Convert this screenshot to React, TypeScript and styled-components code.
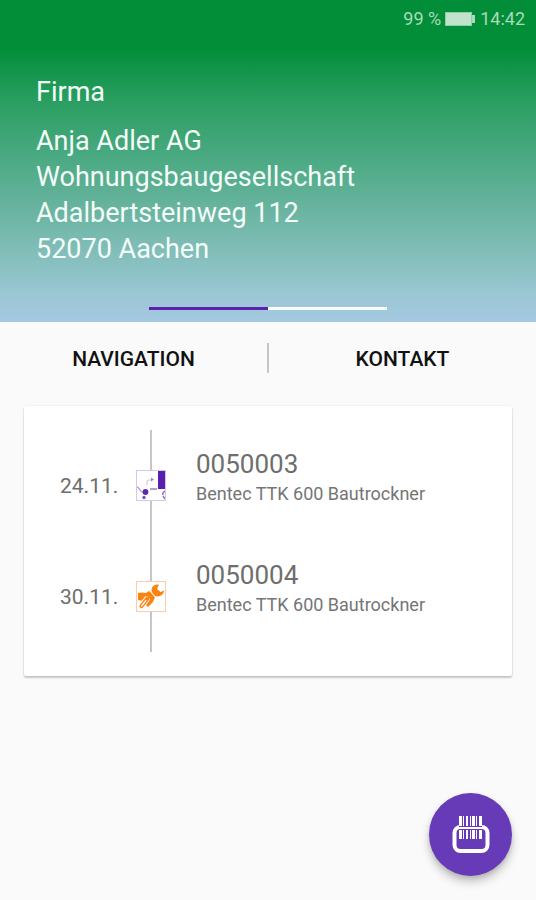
import React from "react";
import styled, { createGlobalStyle } from "styled-components";

const GlobalStyle = createGlobalStyle`
  *, *::before, *::after { box-sizing: border-box; }
  body {
    margin: 0;
    background: #fafafa;
    font-family: Roboto, "Noto Sans", sans-serif;
  }
`;

const Screen = styled.div`
  display: flex;
  flex-direction: column;
  min-height: 100vh;
  background: #fafafa;
`;

const Header = styled.header`
  display: flex;
  flex-direction: column;
  color: #f4fcf8;
  background: linear-gradient(
    180deg,
    #028e38 0,
    #028e38 48px,
    #0f9448 66px,
    #2c9f63 104px,
    #45a87d 149px,
    #64b29b 201px,
    #8cc2c4 270px,
    #9bc8d4 296px,
    #a4c8e2 100%
  );
`;

const StatusBar = styled.div`
  display: flex;
  align-items: center;
  justify-content: flex-end;
  gap: 4px;
  height: 38px;
  padding: 0 11px;
  font-size: 18px;
  line-height: 24px;
  color: #a9dbbb;
`;

const Company = styled.section`
  display: flex;
  flex-direction: column;
  gap: 13px;
  padding: 36px 36px 40px;
  font-size: 27px;
  line-height: 36px;
`;

const CompanyTitle = styled.h1`
  margin: 0;
  font-size: 27px;
  font-weight: 400;
`;

const Address = styled.address`
  font-style: normal;
`;

const Pager = styled.div`
  display: flex;
  align-self: center;
  width: 238px;
  margin-bottom: 12px;
`;

const PagerStep = styled.span<{ $active?: boolean }>`
  flex: 1;
  height: 3px;
  background: ${({ $active }) => ($active ? "#5d22ab" : "#f8fcff")};
`;

const Actions = styled.nav`
  display: flex;
  align-items: center;
  height: 72px;
`;

const ActionButton = styled.button`
  flex: 1;
  height: 48px;
  padding: 2px 0 0;
  border: 0;
  background: none;
  font: 500 21px/24px Roboto, "Noto Sans", sans-serif;
  color: #111;
`;

const Divider = styled.span`
  width: 2px;
  height: 30px;
  background: #c6c6c6;
`;

const Card = styled.main`
  margin: 12px 24px 24px;
  padding: 24px;
  border-radius: 2px;
  background: #fff;
  box-shadow: 0 2px 2px rgba(0, 0, 0, 0.2), 0 0 2px rgba(0, 0, 0, 0.12);
`;

const Timeline = styled.ol`
  margin: 0;
  padding: 0;
  list-style: none;
`;

const Entry = styled.li`
  display: grid;
  grid-template-columns: 76px 30px 1fr;
  padding-left: 12px;
  height: 111px;
  color: #6e6e6e;
`;

const EntryDate = styled.time`
  align-self: center;
  font-size: 21px;
  line-height: 24px;
`;

const Marker = styled.div`
  display: flex;
  flex-direction: column;
  align-items: center;
`;

const Line = styled.span`
  flex: 1;
  width: 2px;
  background: #c6c6c6;
`;

const MarkerBox = styled.span<{ $tone: string }>`
  display: block;
  width: 30px;
  height: 31px;
  border: 1px solid ${({ $tone }) => $tone};

  svg { display: block; width: 100%; height: 100%; }
`;

const EntryText = styled.div`
  display: flex;
  flex-direction: column;
  justify-content: center;
  padding: 0 0 16px 30px;
`;

const EntryNumber = styled.span`
  font-size: 26px;
  line-height: 32px;
`;

const EntryName = styled.span`
  font-size: 18px;
  line-height: 28px;
  color: #757575;
`;

const ScanButton = styled.button`
  position: fixed;
  right: 24px;
  bottom: 24px;
  width: 83px;
  height: 83px;
  padding: 0;
  border: 0;
  border-radius: 50%;
  background: #673ab7;
  box-shadow: 0 6px 10px rgba(0, 0, 0, 0.22), 0 2px 4px rgba(0, 0, 0, 0.12);

  svg { display: block; }
`;

const BatteryIcon = () => (
  <svg width="31" height="14" viewBox="0 0 31 14" aria-hidden="true">
    <rect x="0.5" y="0.5" width="26" height="13" fill="#bfe3cb" stroke="#8fcda5" />
    <rect x="27" y="3" width="3" height="8" fill="#a9dbbb" />
  </svg>
);

const DeliveryIcon = () => (
  <svg viewBox="0 0 28 29" aria-hidden="true">
    <rect x="21" y="0" width="7" height="18" fill="#5b1fad" />
    <path d="M10 14V11Q10 9 12 9H15" fill="none" stroke="#c9bfd8" strokeWidth="1" />
    <path d="M14 6.5L17 8.5L14 10.5Z" fill="#9c83c4" />
    <rect x="13" y="17" width="7" height="2" fill="#b3a0d6" />
    <path d="M0 16Q2 17 3 19T6 21" fill="none" stroke="#b3a0d6" strokeWidth="1.5" />
    <circle cx="8.5" cy="21" r="2.9" fill="#5b2ab0" />
    <circle cx="7" cy="26.5" r="1.7" fill="#7a50c0" />
    <path d="M28 20Q25 22 26 24M26 25L28 28" fill="none" stroke="#9274c9" strokeWidth="1.6" />
  </svg>
);

const RepairIcon = () => (
  <svg viewBox="0 0 28 29" aria-hidden="true">
    <path d="M22 2.500Q15 2 14.500 8Q14.500 10 16 12L18 14Q25 16 27.500 8.500L23.500 10L20 7Z" fill="#fb8410" />
    <path d="M1 11L5 10.500L9 11L12 9L16 12L18 15L16 20L11 25L8.500 22.500L13 17L11 14L6 19L1 18Z" fill="#fb8410" />
    <path d="M14 10L18 15" fill="none" stroke="#fff" strokeWidth="1" />
    <path d="M4.500 24L9.500 17.500" fill="none" stroke="#fff" strokeWidth="6" strokeLinecap="round" />
    <path d="M4.500 24L10.500 16.500" fill="none" stroke="#fb8410" strokeWidth="4.200" strokeLinecap="round" />
    <path d="M4.500 24L9 18.500" fill="none" stroke="#fff" strokeWidth="1.200" strokeLinecap="round" />
  </svg>
);

const BARS = [
  [30, 3],
  [34, 1],
  [37, 2],
  [41, 1],
  [43, 3],
  [47, 1],
  [50, 3],
];

const ScanIcon = () => (
  <svg width="83" height="83" viewBox="0 0 83 83" aria-hidden="true">
    <rect x="25.500" y="34" width="33" height="24" rx="6" fill="none" stroke="#fff" strokeWidth="4" />
    <rect x="30" y="30" width="23" height="7" fill="#673ab7" />
    <rect x="29" y="34" width="25" height="2" fill="#fff" />
    {BARS.map(([x, width]) => (
      <g key={x} fill="#fff">
        <rect x={x} y="23" width={width} height="10" />
        <rect x={x} y="37" width={width} height="9" />
      </g>
    ))}
  </svg>
);

const entries = [
  { date: "24.11.", number: "0050003", name: "Bentec TTK 600 Bautrockner", tone: "#d5c8ef", Icon: DeliveryIcon },
  { date: "30.11.", number: "0050004", name: "Bentec TTK 600 Bautrockner", tone: "#ffc9ae", Icon: RepairIcon },
];

export default function App() {
  return (
    <Screen>
      <GlobalStyle />
      <Header>
        <StatusBar>
          <span>99 %</span>
          <BatteryIcon />
          <span>14:42</span>
        </StatusBar>
        <Company>
          <CompanyTitle>Firma</CompanyTitle>
          <Address>
            Anja Adler AG
            <br />
            Wohnungsbaugesellschaft
            <br />
            Adalbertsteinweg 112
            <br />
            52070 Aachen
          </Address>
        </Company>
        <Pager>
          <PagerStep $active />
          <PagerStep />
        </Pager>
      </Header>
      <Actions>
        <ActionButton type="button">NAVIGATION</ActionButton>
        <Divider />
        <ActionButton type="button">KONTAKT</ActionButton>
      </Actions>
      <Card>
        <Timeline>
          {entries.map(({ date, number, name, tone, Icon }) => (
            <Entry key={number}>
              <EntryDate>{date}</EntryDate>
              <Marker>
                <Line />
                <MarkerBox $tone={tone}>
                  <Icon />
                </MarkerBox>
                <Line />
              </Marker>
              <EntryText>
                <EntryNumber>{number}</EntryNumber>
                <EntryName>{name}</EntryName>
              </EntryText>
            </Entry>
          ))}
        </Timeline>
      </Card>
      <ScanButton type="button" aria-label="Barcode scannen">
        <ScanIcon />
      </ScanButton>
    </Screen>
  );
}
